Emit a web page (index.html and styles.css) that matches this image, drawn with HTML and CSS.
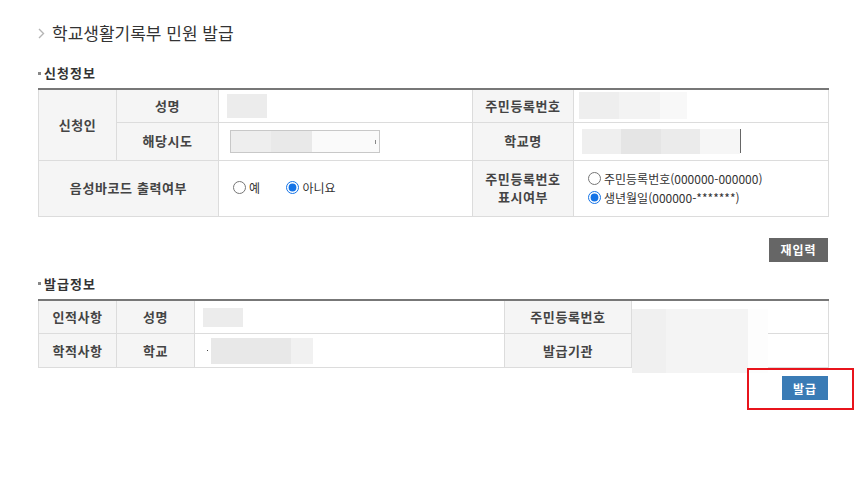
FILE: index.html
```html
<!DOCTYPE html>
<html lang="ko">
<head>
    <meta charset="UTF-8">
    <meta name="viewport" content="width=device-width, initial-scale=1.0">
    <title>학교생활기록부 민원 발급</title>
    <link rel="stylesheet" href="styles.css">
</head>
<body>
    <div class="wrap">
        <h1 class="page-title">
            <svg class="chev" width="7" height="11" viewBox="0 0 7 11"><path d="M1 1l4.5 4.5L1 10" fill="none" stroke="#b5b5b5" stroke-width="1.4"/></svg>
            학교생활기록부 민원 발급
        </h1>

        <h2 class="sec-title"><span class="dot"></span>신청정보</h2>
        <table class="form-table">
            <colgroup>
                <col class="c78"><col class="c102"><col class="c254"><col class="c101"><col class="c255">
            </colgroup>
            <tbody>
                <tr class="r1">
                    <th rowspan="2">신청인</th>
                    <th>성명</th>
                    <td><span class="blur b-name"></span></td>
                    <th>주민등록번호</th>
                    <td><span class="blur b-rrn"></span></td>
                </tr>
                <tr class="r2">
                    <th>해당시도</th>
                    <td>
                        <div class="fake-select">
                            <span class="blur b-sel"></span>
                            <span class="sel-mark"></span>
                        </div>
                    </td>
                    <th>학교명</th>
                    <td><span class="blur b-school"></span><span class="caret"></span></td>
                </tr>
                <tr class="r3">
                    <th colspan="2">음성바코드 출력여부</th>
                    <td>
                        <label class="opt"><input type="radio" name="voice">예</label>
                        <label class="opt"><input type="radio" name="voice" checked>아니요</label>
                    </td>
                    <th>주민등록번호<br>표시여부</th>
                    <td>
                        <label class="opt block"><input type="radio" name="show">주민등록번호(000000-000000)</label>
                        <label class="opt block"><input type="radio" name="show" checked>생년월일(000000-*******)</label>
                    </td>
                </tr>
            </tbody>
        </table>

        <div class="btn-row">
            <button class="btn btn-gray">재입력</button>
        </div>

        <h2 class="sec-title sec-2"><span class="dot"></span>발급정보</h2>
        <div class="table-box">
            <table class="form-table">
                <colgroup>
                    <col class="c78"><col class="c78"><col class="c310"><col class="c127"><col class="c197">
                </colgroup>
                <tbody>
                    <tr class="r4">
                        <th>인적사항</th>
                        <th>성명</th>
                        <td><span class="blur b-name2"></span></td>
                        <th>주민등록번호</th>
                        <td></td>
                    </tr>
                    <tr class="r4">
                        <th>학적사항</th>
                        <th>학교</th>
                        <td><span class="tick"></span><span class="blur b-school2"></span></td>
                        <th>발급기관</th>
                        <td></td>
                    </tr>
                </tbody>
            </table>
            <div class="cover"></div>
        </div>

        <div class="btn-row issue-row">
            <div class="highlight"></div>
            <button class="btn btn-blue">발급</button>
        </div>
    </div>
</body>
</html>
```

FILE: styles.css
```css
body {
    margin: 0;
    background-color: #fff;
    font-family: "Noto Sans CJK KR", "Noto Sans", sans-serif;
    color: #333;
}
.wrap {
    width: 790px;
    padding: 20px 0 60px 38px;
}
.page-title {
    margin: 0;
    height: 26px;
    line-height: 26px;
    font-size: 17px;
    font-weight: normal;
    color: #333;
    display: flex;
    align-items: center;
}
.chev {
    margin-right: 7px;
}
.sec-title {
    margin: 18px 0 0;
    height: 18px;
    line-height: 18px;
    font-size: 13px;
    font-weight: bold;
    color: #333;
    letter-spacing: 1px;
    display: flex;
    align-items: center;
}
.sec-2 {
    margin-top: 13px;
}
.dot {
    width: 3px;
    height: 3px;
    background-color: #888;
    margin: 0 3px 0 0;
}
.form-table {
    width: 790px;
    table-layout: fixed;
    border-collapse: collapse;
    border-top: 2px solid #777;
    margin-top: 6px;
}
.c78 { width: 78px; }
.c102 { width: 102px; }
.c254 { width: 254px; }
.c101 { width: 101px; }
.c255 { width: 255px; }
.c310 { width: 310px; }
.c127 { width: 127px; }
.c197 { width: 197px; }
.form-table th,
.form-table td {
    border: 1px solid #dcdcdc;
    padding: 0 7px;
    font-size: 12px;
    vertical-align: middle;
}
.form-table th {
    background-color: #f5f5f5;
    color: #444;
    font-size: 13px;
    letter-spacing: 0.6px;
    line-height: 18px;
}
.form-table td {
    background-color: #fff;
}
.r1 { height: 33px; }
.r2 { height: 38px; }
.r3 { height: 56px; }
.r4 { height: 34px; }
.blur {
    display: inline-block;
    vertical-align: middle;
    background-color: #ececec;
}
.b-name {
    width: 40px;
    height: 24px;
    margin-left: 1px;
}
.b-rrn {
    width: 108px;
    height: 27px;
    margin-left: -2px;
    background: linear-gradient(90deg, #eeeeee 0 37%, #f3f3f3 37% 75%, #f8f8f8 75%);
}
.fake-select {
    width: 148px;
    height: 21px;
    border: 1px solid #c8c8c8;
    margin-left: 4px;
    display: flex;
    align-items: center;
    position: relative;
    background-color: #fafafa;
}
.b-sel {
    width: 81px;
    height: 21px;
    background: linear-gradient(90deg, #eeeeee 0 50%, #e9e9e9 50%);
}
.sel-mark {
    position: absolute;
    right: 3px;
    top: 9px;
    width: 1px;
    height: 4px;
    background-color: #888;
}
.b-school {
    width: 158px;
    height: 25px;
    margin-left: 1px;
    background: linear-gradient(90deg, #efefef 0 25%, #e5e5e5 25% 50%, #ebebeb 50% 75%, #f6f6f6 75%);
}
.caret {
    display: inline-block;
    vertical-align: middle;
    width: 1px;
    height: 24px;
    background-color: #666;
}
.b-name2 {
    width: 40px;
    height: 19px;
    margin-left: 1px;
}
.tick {
    display: inline-block;
    vertical-align: middle;
    width: 1px;
    height: 1px;
    background-color: #444;
    margin: 0 3px 0 5px;
}
.b-school2 {
    width: 102px;
    height: 26px;
    background: linear-gradient(90deg, #e8e8e8 0 78%, #f1f1f1 78%);
}
.table-box {
    position: relative;
}
.cover {
    position: absolute;
    left: 594px;
    top: 10px;
    width: 136px;
    height: 64px;
    background: linear-gradient(90deg, #f0f0f0 0 25%, #f4f4f4 25% 85%, #fdfdfd 85%);
}
.opt {
    display: inline-flex;
    align-items: center;
    font-size: 12px;
    color: #333;
    margin-left: 7px;
    margin-right: 16px;
}
.opt input {
    width: 13px;
    height: 13px;
    margin: 0 3px 0 0;
    accent-color: #1473e6;
}
.opt.block {
    display: flex;
    height: 19px;
}
.btn-row {
    display: flex;
    justify-content: flex-end;
    margin-top: 21px;
}
.btn {
    border: 0;
    height: 24px;
    padding: 0;
    color: #fff;
    font-family: "Noto Sans CJK KR", sans-serif;
    font-size: 12px;
    font-weight: bold;
    letter-spacing: 1px;
}
.btn-gray {
    width: 59px;
    background-color: #666;
}
.btn-blue {
    width: 46px;
    background-color: #3a7bb5;
}
.issue-row {
    position: relative;
    margin-top: 8px;
}
.highlight {
    position: absolute;
    left: 709px;
    top: -8px;
    width: 103px;
    height: 38px;
    border: 2px solid #e8141c;
}
```
